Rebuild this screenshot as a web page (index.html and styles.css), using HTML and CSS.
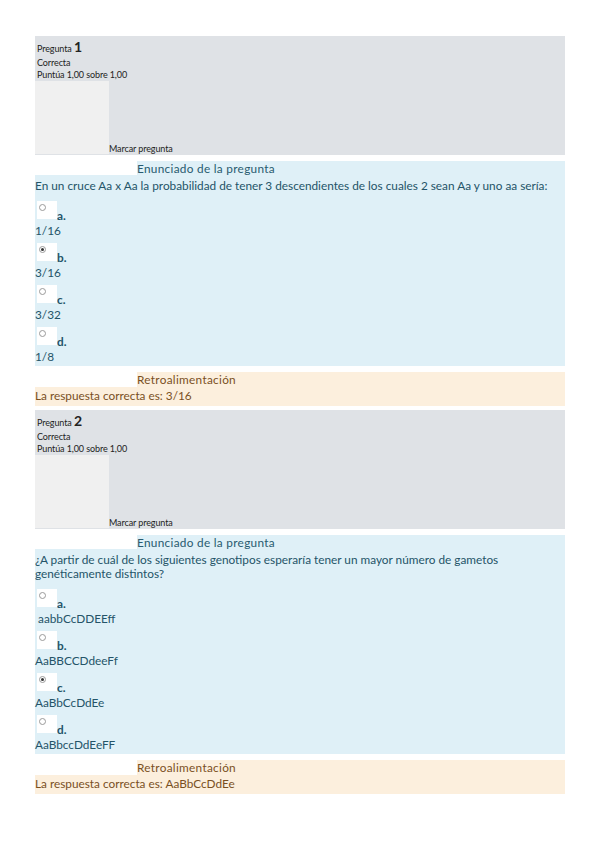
FILE: index.html
```html
<!DOCTYPE html>
<html lang="es">
<head>
<meta charset="utf-8">
<title>Pregunta</title>
<link rel="stylesheet" href="styles.css">
</head>
<body>
<div class="page">

  <div class="info">
    <div class="qno">Pregunta <span class="num">1</span></div>
    <div class="state">Correcta</div>
    <div class="grade">Puntúa 1,00 sobre 1,00</div>
    <div class="flagrow">
      <div class="flagbox"></div>
      <div class="flag">Marcar pregunta</div>
    </div>
  </div>

  <div class="content">
    <div class="band q-band">Enunciado de la pregunta</div>
    <div class="formulation">
      <div class="qtext">En un cruce Aa x Aa la probabilidad de tener 3 descendientes de los cuales 2 sean Aa y uno aa sería:</div>
      <div class="opt">
        <div class="optrow"><span class="radio"><span class="dot"></span></span><span class="letter">a.</span></div>
        <div class="val">1/16</div>
      </div>
      <div class="opt">
        <div class="optrow"><span class="radio"><span class="dot checked"></span></span><span class="letter">b.</span></div>
        <div class="val">3/16</div>
      </div>
      <div class="opt">
        <div class="optrow"><span class="radio"><span class="dot"></span></span><span class="letter">c.</span></div>
        <div class="val">3/32</div>
      </div>
      <div class="opt">
        <div class="optrow"><span class="radio"><span class="dot"></span></span><span class="letter">d.</span></div>
        <div class="val">1/8</div>
      </div>
    </div>
    <div class="band f-band">Retroalimentación</div>
    <div class="feedback">La respuesta correcta es: 3/16</div>
  </div>

  <div class="info">
    <div class="qno">Pregunta <span class="num">2</span></div>
    <div class="state">Correcta</div>
    <div class="grade">Puntúa 1,00 sobre 1,00</div>
    <div class="flagrow">
      <div class="flagbox"></div>
      <div class="flag">Marcar pregunta</div>
    </div>
  </div>

  <div class="content">
    <div class="band q-band">Enunciado de la pregunta</div>
    <div class="formulation">
      <div class="qtext">¿A partir de cuál de los siguientes genotipos esperaría tener un mayor número de gametos<br>genéticamente distintos?</div>
      <div class="opt">
        <div class="optrow"><span class="radio"><span class="dot"></span></span><span class="letter">a.</span></div>
        <div class="val">&nbsp;aabbCcDDEEff</div>
      </div>
      <div class="opt">
        <div class="optrow"><span class="radio"><span class="dot"></span></span><span class="letter">b.</span></div>
        <div class="val">AaBBCCDdeeFf</div>
      </div>
      <div class="opt">
        <div class="optrow"><span class="radio"><span class="dot checked"></span></span><span class="letter">c.</span></div>
        <div class="val">AaBbCcDdEe</div>
      </div>
      <div class="opt">
        <div class="optrow"><span class="radio"><span class="dot"></span></span><span class="letter">d.</span></div>
        <div class="val">AaBbccDdEeFF</div>
      </div>
    </div>
    <div class="band f-band">Retroalimentación</div>
    <div class="feedback">La respuesta correcta es: AaBbCcDdEe</div>
  </div>

</div>
</body>
</html>
```

FILE: styles.css
```css
html, body {
  margin: 0;
  padding: 0;
  background: #ffffff;
}

.page {
  width: 530px;
  margin-left: 35px;
  padding-top: 36px;
  font-family: Lato, "Open Sans", "Liberation Sans", sans-serif;
}

.info {
  background: #dfe2e6;
  height: 119px;
  padding: 3px 0 0 2px;
  box-sizing: border-box;
  color: #222222;
  font-size: 9px;
  letter-spacing: -0.1px;
  display: flex;
  flex-direction: column;
}

.qno {
  line-height: 16px;
}

.num {
  font-size: 14px;
  font-weight: bold;
  letter-spacing: 0;
}

.state {
  line-height: 12px;
}

.grade {
  line-height: 12px;
}

.flagrow {
  display: flex;
  align-items: flex-end;
  margin-left: -2px;
}

.flagbox {
  width: 74px;
  height: 73px;
  background: #f0f0f0;
}

.flag {
  line-height: 10px;
}

.content {
  margin-top: 6px;
  margin-bottom: 4px;
}

.band {
  margin-left: 102px;
  height: 14px;
  line-height: 15px;
  font-size: 11.8px;
  letter-spacing: 0.3px;
}

.q-band {
  background: #dff0f7;
  color: #285b6f;
}

.f-band {
  background: #fcefdd;
  color: #7a4f1f;
  margin-top: 6px;
  height: 15px;
}

.formulation {
  background: #dff0f7;
  color: #245468;
  font-size: 11.8px;
  padding: 4px 0 2px 0;
}

.qtext {
  line-height: 14px;
  padding-bottom: 3px;
}

.opt {
  margin-top: 5px;
}

.optrow {
  display: flex;
  align-items: flex-end;
  height: 18px;
  padding-left: 2px;
}

.radio {
  width: 20px;
  height: 18px;
  background: #ffffff;
  position: relative;
  display: block;
}

.dot {
  position: absolute;
  left: 2px;
  top: 3px;
  width: 5px;
  height: 5px;
  border: 1px solid #9a9a9a;
  border-radius: 50%;
  background: #ffffff;
}

.dot.checked::after {
  content: "";
  position: absolute;
  left: 1px;
  top: 1px;
  width: 3px;
  height: 3px;
  border-radius: 50%;
  background: #333333;
}

.letter {
  font-weight: bold;
  line-height: 12px;
  margin-bottom: -3px;
}

.val {
  line-height: 15px;
  margin-top: 4px;
}

.feedback {
  background: #fcefdd;
  color: #7a4f1f;
  font-size: 11.8px;
  line-height: 15px;
  height: 19px;
  padding-top: 1px;
  box-sizing: border-box;
}
```
